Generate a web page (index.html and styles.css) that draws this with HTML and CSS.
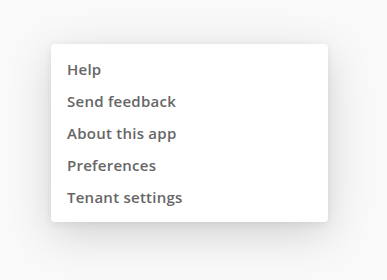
FILE: index.html
```html
<!DOCTYPE html>
<html>
<head>
<meta charset="utf-8">
<link rel="stylesheet" href="styles.css">
</head>
<body>
<div class="stage">
  <ul class="menu">
    <li class="item">Help</li>
    <li class="item">Send feedback</li>
    <li class="item">About this app</li>
    <li class="item">Preferences</li>
    <li class="item">Tenant settings</li>
  </ul>
</div>
</body>
</html>
```
FILE: styles.css
```css
html, body {
  margin: 0;
  padding: 0;
  background: #f9f9f9;
}
.stage {
  width: 387px;
  height: 280px;
  padding: 44px 0 0 51px;
  box-sizing: border-box;
}
.menu {
  list-style: none;
  margin: 0;
  padding: 9px 0;
  width: 277px;
  background: #ffffff;
  border-radius: 4px;
  box-shadow: 0 12px 44px rgba(0, 0, 0, 0.16), 0 2px 8px rgba(0, 0, 0, 0.07);
}
.item {
  height: 32px;
  line-height: 33px;
  padding: 0 16px;
  font-family: "Open Sans", sans-serif;
  font-weight: 600;
  font-size: 15px;
  letter-spacing: 0.25px;
  color: #666666;
}
```
